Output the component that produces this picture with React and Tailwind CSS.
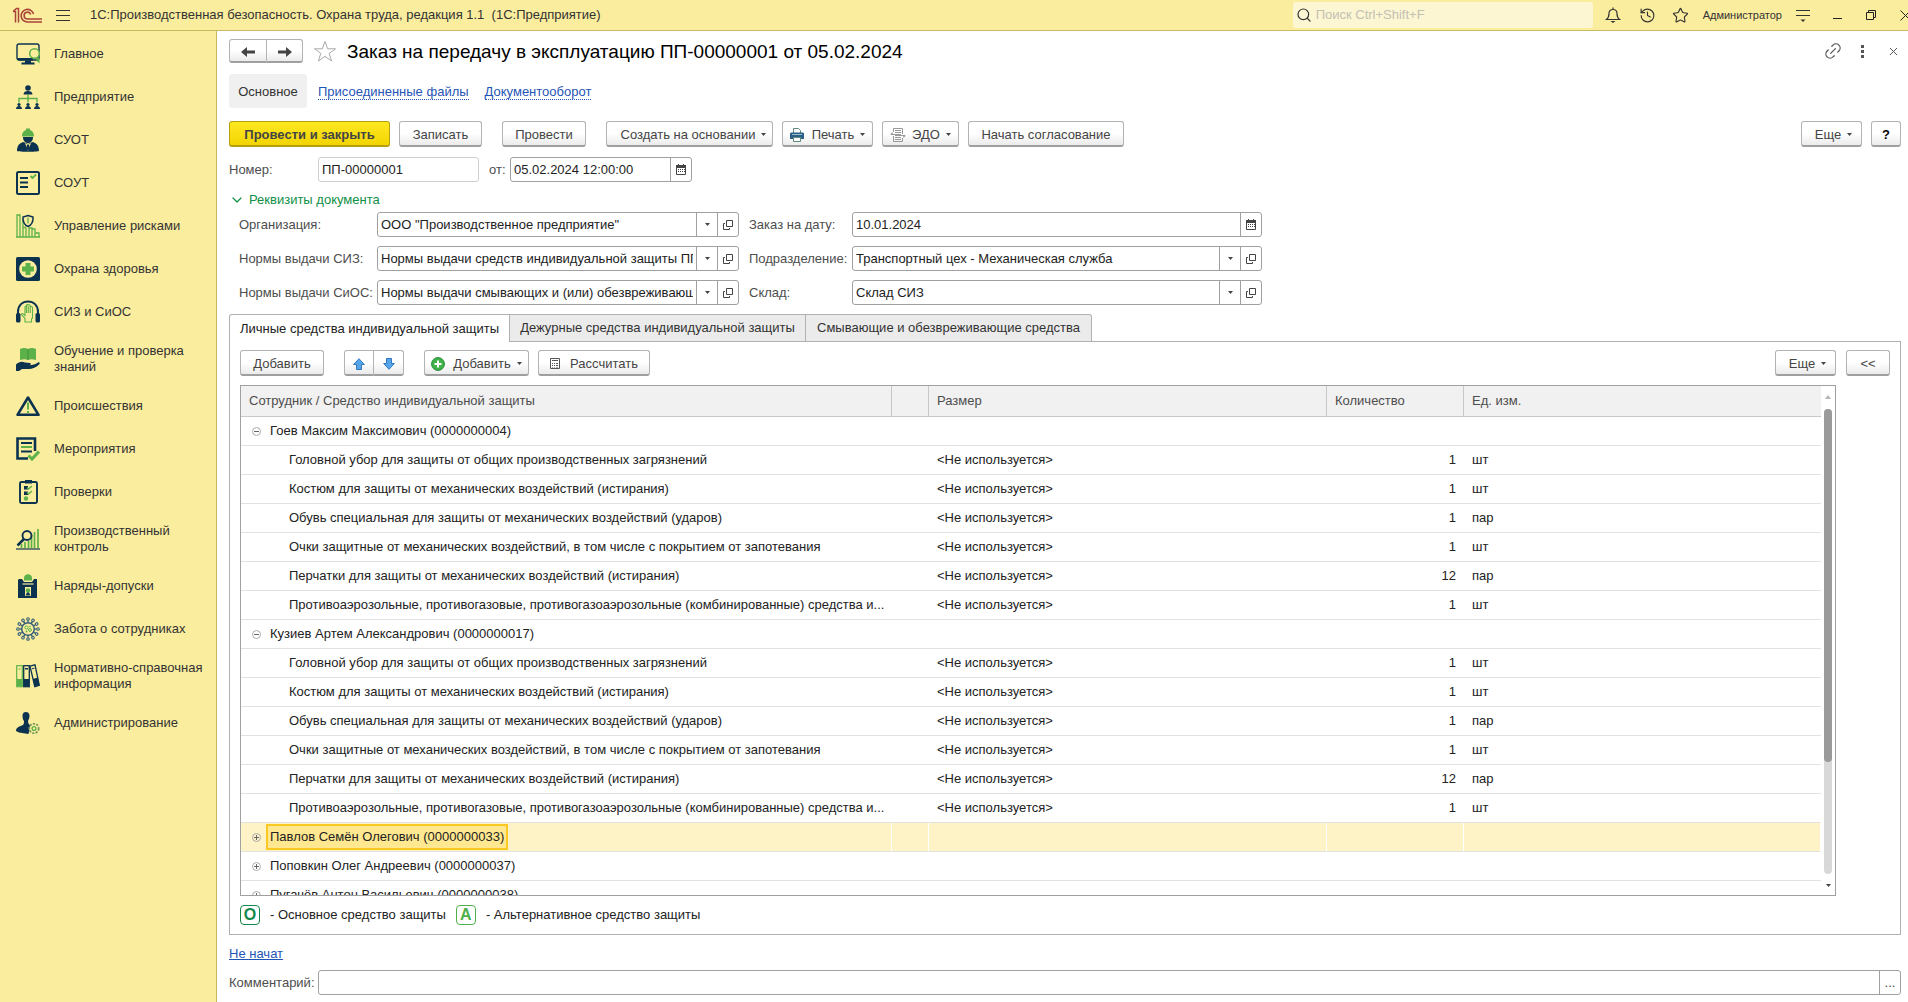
import { Bell, History, Star, Search, Link2, ChevronDown } from 'lucide-react';

const NAVY = '#0b3350';
const GREEN = '#5cb14a';

const Svg = ({ children, size = 24 }) => (
  <svg width={size} height={size} viewBox="0 0 24 24" fill="none" className="shrink-0" aria-hidden="true">
    {children}
  </svg>
);

const MonitorIcon = () => (
  <Svg>
    <rect x="1" y="2" width="22" height="16" rx="2" stroke={NAVY} strokeWidth="1.4" />
    <path d="M1 16h16v2.5H2.5z" fill={NAVY} />
    <path d="M9 18.500h6v2h3.500v2h-13v-2H9z" fill={NAVY} />
    <circle cx="18.500" cy="11.500" r="4.800" stroke={GREEN} strokeWidth="1.500" fill="#fbed9e" />
    <path d="M21 15.500l2.500 1v5l-3-3z" fill={GREEN} />
  </Svg>
);

const OrgIcon = () => (
  <Svg>
    <circle cx="12" cy="3" r="2.800" fill={NAVY} />
    <path d="M7.500 9.500c0-2.500 2-3.500 4.500-3.500s4.500 1 4.500 3.500z" fill={NAVY} />
    <path d="M12 9.500v8M3 17.500v-4h18v4" stroke={GREEN} strokeWidth="1.400" />
    {[3, 12, 21].map((x) => (
      <g key={x} fill={NAVY}>
        <circle cx={x} cy="19.500" r="1.600" />
        <path d={`M${x - 3} 24c0-2 1.500-3 3-3s3 1 3 3z`} />
      </g>
    ))}
  </Svg>
);

const WorkerIcon = () => (
  <Svg>
    <path d="M6 8.500c0-4 2-6 4-6.500V.500h4V2c2 .500 4 2.500 4 6.500z" fill={GREEN} />
    <path d="M7 9h10c0 4-2.500 6-5 6s-5-2-5-6z" fill={NAVY} />
    <path d="M1 23c0-5 2-8 6.500-9l4.500 2 4.500-2c4.500 1 6.500 4 6.500 9-2 1-20 1-22 0z" fill={NAVY} />
    <path d="M9 15l3 8 3-8-1.500 1h-3z" fill="#fbed9e" />
    <path d="M11 16.500h2l.800 4-1.800 2-1.800-2z" fill={NAVY} />
  </Svg>
);

const ChecklistIcon = () => (
  <Svg>
    <rect x="1" y="1" width="22" height="22" rx="1.500" stroke={NAVY} strokeWidth="2" />
    <path d="M4 7h8M4 11.500h8M4 16h8" stroke={NAVY} strokeWidth="1.800" />
    <path d="M14.500 5l2 2 3.500-3.500" stroke={GREEN} strokeWidth="1.800" />
  </Svg>
);

const RiskIcon = () => (
  <Svg>
    <path d="M1 23V1h3v22M7 23V5M7 13.500h3M10 23v-9M13 23V14h3v9M16 15h3v8M19 19h4v4M0 23h24" stroke={GREEN} strokeWidth="1.300" />
    <path d="M12 1.500l5 1.500c.300 5-1.500 8-5 9.500C8.500 11 6.700 8 7 3z" fill="#fbed9e" stroke={NAVY} strokeWidth="1.500" />
    <path d="M12 3.500v6" stroke={GREEN} strokeWidth="1.300" />
  </Svg>
);

const HealthIcon = () => (
  <Svg>
    <rect width="24" height="24" rx="1.500" fill={NAVY} />
    <circle cx="12" cy="12" r="8.800" fill="#fbed9e" />
    <path d="M9.500 6h5v3.500H18v5h-3.500V18h-5v-3.500H6v-5h3.500z" fill={GREEN} />
  </Svg>
);

const HeadphonesIcon = () => (
  <Svg>
    <path d="M2 15v-3C2 5 6.500 1.500 12 1.500S22 5 22 12v3" stroke={NAVY} strokeWidth="2" />
    <rect x="0" y="13" width="4.500" height="9.500" rx="1.500" fill={NAVY} />
    <rect x="19.500" y="13" width="4.500" height="9.500" rx="1.500" fill={NAVY} />
    <path d="M9 22v-3.500L5.500 14.500c0-1.200 1-1.200 1.600-.600L9 15.500V7c0-1 1.500-1 1.500 0V5.500c0-1.200 1.800-1.200 1.800 0 0-1.200 1.900-1 1.900.300v1.500c0-1 2.300-1 2.300.200V18l-1 1v3zM10.500 7v6M12.300 6v7M14.200 7v6" stroke={GREEN} strokeWidth="1.100" />
  </Svg>
);

const TrainingIcon = () => (
  <Svg>
    <path d="M4 2c3-1.500 6-1 8 0 2-1 5-1.500 8 0v11c-3-1-6-1-8 0-2-1-5-1-8 0z" fill={GREEN} />
    <path d="M12 2v11" stroke="#3d8a35" strokeWidth=".800" />
    <path d="M0 17.500c3-3 6-3.500 9-2l5 .500c1.500.500 1 2-.500 2.200 3 0 6-1 8.500-2.700 1.500-.500 2 .500 1.500 1.500-3 3.500-7 5-11 5H6l-3 2H0z" fill={NAVY} />
  </Svg>
);

const WarningIcon = () => (
  <Svg>
    <path d="M12 3.500L22.500 20.800h-21z" stroke={NAVY} strokeWidth="2.600" strokeLinejoin="round" />
    <path d="M12 8.500v7M12 17v2" stroke={GREEN} strokeWidth="2" />
  </Svg>
);

const ActionsIcon = () => (
  <Svg>
    <path d="M19 14V1.500H1.500v20H12" stroke={NAVY} strokeWidth="2.600" />
    <path d="M5 6h11M5 14.500h11" stroke={NAVY} strokeWidth="2" />
    <path d="M5 10h11" stroke={GREEN} strokeWidth="2" />
    <path d="M12.500 18.500l3.500 3.500 7-7.500" stroke={GREEN} strokeWidth="3" />
  </Svg>
);

const InspectIcon = () => (
  <Svg>
    <rect x="4" y="2" width="17" height="21" rx="1.500" stroke={NAVY} strokeWidth="1.900" />
    <rect x="9" y="0" width="7" height="3.500" fill={NAVY} />
    <path d="M8 6h4v3.500H8zM8 11.500h4V15H8z" fill={NAVY} />
    <path d="M11 7.500L12.500 9 16 6M11 12.500l1.500 1.500 3.500-3" stroke={GREEN} strokeWidth="1.500" />
    <circle cx="10" cy="18.500" r="2.200" fill={GREEN} />
  </Svg>
);

const ControlIcon = () => (
  <Svg>
    <path d="M5.500 21v-4M9 21v-6M12.500 21v-7M15.500 21V8M18.500 21V5M22 21V2" stroke={GREEN} strokeWidth="1.700" />
    <circle cx="11" cy="8.500" r="4.500" stroke={NAVY} strokeWidth="1.900" fill="#fbed9e" />
    <path d="M8 12l-6.500 6.500" stroke={NAVY} strokeWidth="2.500" />
    <path d="M0 22h24" stroke={NAVY} strokeWidth="1.200" />
  </Svg>
);

const PermitIcon = () => (
  <Svg>
    <path d="M3 5h3l2 3h8l2-3h3v19H2V6z" fill={NAVY} />
    <path d="M8 6.500V4c0-5 8-5 8 0v2.500z" fill={GREEN} />
    <path d="M6.500 10h11" stroke="#fbed9e" strokeWidth="1.200" />
    <rect x="9" y="13" width="6" height="9" fill="#fbed9e" />
    <circle cx="12" cy="16.500" r="2.300" fill={GREEN} />
    <path d="M9.500 21.500h5l-1.500-3h-2z" fill={NAVY} />
  </Svg>
);

const CareIcon = () => (
  <Svg>
    <circle cx="12" cy="12" r="6.300" stroke="#35607a" strokeWidth="1.500" />
    {[0, 30, 60, 90, 120, 150, 180, 210, 240, 270, 300, 330].map((a) => (
      <g key={a} transform={`rotate(${a} 12 12)`} stroke="#35607a">
        <path d="M12 6V3.500" strokeWidth="1.300" />
        <circle cx="12" cy="2" r="1.300" strokeWidth="1.100" />
      </g>
    ))}
    <circle cx="10.500" cy="10.500" r="1.600" stroke={GREEN} />
    <circle cx="14" cy="13" r="1.400" stroke={GREEN} />
    <circle cx="10.500" cy="14.500" r=".900" fill={GREEN} />
    <circle cx="14" cy="9.500" r=".800" fill={GREEN} />
  </Svg>
);

const BindersIcon = () => (
  <Svg>
    <rect x=".700" y="1.700" width="5.600" height="21" stroke={GREEN} strokeWidth="1.200" />
    <path d="M1 15h5v7H1z" fill={GREEN} />
    <path d="M2.500 5h2" stroke={GREEN} />
    <rect x="7.700" y="1.700" width="5.600" height="21" stroke={NAVY} strokeWidth="1.300" />
    <path d="M8 15h5v7H8zM9 4h3v1.500H9z" fill={NAVY} />
    <path d="M14 2.200l5-1.400 4.300 20.500-4.500 1.400z" stroke={NAVY} strokeWidth="1.300" />
    <path d="M16.800 15l5-1.400 1.600 7.700-4.600 1.400z" fill={NAVY} />
    <path d="M16 4.800l2.500-.700" stroke={NAVY} />
  </Svg>
);

const AdminIcon = () => (
  <Svg>
    <path d="M6.500 4.500C6.500 2 8 1 10 1s3.500 1.500 3.500 4c0 2-1 4-1.500 5 0 2 1 3.500 2.500 4.500l-2 8.500C8 22 4 22.500 0 20c0-3 2-4 6-5.500 2-1 2-2.500 2-4.500-1-1-1.500-3-1.500-5.500z" fill={NAVY} />
    <circle cx="18" cy="17.500" r="4.700" fill="#fbed9e" stroke="#7d9a5c" strokeWidth="1.800" strokeDasharray="2.200 1.200" />
    <circle cx="18" cy="17.500" r="1.900" stroke={GREEN} strokeWidth="1.300" />
  </Svg>
);

const sections = [
  { label: 'Главное', icon: MonitorIcon },
  { label: 'Предприятие', icon: OrgIcon },
  { label: 'СУОТ', icon: WorkerIcon },
  { label: 'СОУТ', icon: ChecklistIcon },
  { label: 'Управление рисками', icon: RiskIcon },
  { label: 'Охрана здоровья', icon: HealthIcon },
  { label: 'СИЗ и СиОС', icon: HeadphonesIcon },
  { label: 'Обучение и проверка знаний', icon: TrainingIcon, tall: true },
  { label: 'Происшествия', icon: WarningIcon },
  { label: 'Мероприятия', icon: ActionsIcon },
  { label: 'Проверки', icon: InspectIcon },
  { label: 'Производственный контроль', icon: ControlIcon, tall: true },
  { label: 'Наряды-допуски', icon: PermitIcon },
  { label: 'Забота о сотрудниках', icon: CareIcon },
  { label: 'Нормативно-справочная информация', icon: BindersIcon, tall: true },
  { label: 'Администрирование', icon: AdminIcon },
];

const items = [
  ['Головной убор для защиты от общих производственных загрязнений', 1, 'шт'],
  ['Костюм для защиты от механических воздействий (истирания)', 1, 'шт'],
  ['Обувь специальная для защиты от механических воздействий (ударов)', 1, 'пар'],
  ['Очки защитные от механических воздействий, в том числе с покрытием от запотевания', 1, 'шт'],
  ['Перчатки для защиты от механических воздействий (истирания)', 12, 'пар'],
  ['Противоаэрозольные, противогазовые, противогазоаэрозольные (комбинированные) средства и...', 1, 'шт'],
];

const employees = [
  { name: 'Гоев Максим Максимович (0000000004)', items },
  { name: 'Кузиев Артем Александрович (0000000017)', items },
  { name: 'Павлов Семён Олегович (0000000033)', selected: true },
  { name: 'Поповкин Олег Андреевич (0000000037)' },
  { name: 'Пугачёв Антон Васильевич (0000000038)' },
];

const Caret = () => (
  <svg width="5" height="3" viewBox="0 0 5 3" className="shrink-0" aria-hidden="true">
    <path d="M0 0h5L2.500 3z" fill="#444" />
  </svg>
);

const CalendarIcon = () => (
  <svg width="10" height="11" viewBox="0 0 10 11" aria-hidden="true">
    <path d="M.500 2.500h9v8h-9z" fill="none" stroke="#444" />
    <path d="M0 1h10v3H0zM2 0h1v2H2zM7 0h1v2H7zM2 5h1v1H2zM4 5h1v1H4zM6 5h1v1H6zM2 7h1v1H2zM4 7h1v1H4zM6 7h1v1H6zM8 5h1v1H8zM8 7h1v1H8z" fill="#444" />
  </svg>
);

const OpenIcon = () => (
  <svg width="10" height="10" viewBox="0 0 10 10" fill="none" stroke="#444" aria-hidden="true">
    <path d="M3.500.500h6v6h-6zM2 3.500H.500v6h6V8" />
  </svg>
);

const PrinterIcon = () => (
  <svg width="14" height="14" viewBox="0 0 14 14" className="mr-[2px]" aria-hidden="true">
    <path d="M3.500 5V.500h5l2 2V5" fill="#fff" stroke="#5f8a7c" />
    <path d="M0 6c0-1 .500-1.500 1.500-1.500h11c1 0 1.500.500 1.500 1.500v5H0z" fill="#2b5f86" />
    <path d="M2 6.500h10" stroke="#9dbdd2" />
    <path d="M3.500 9.500h7v4h-7z" fill="#fff" stroke="#5f8a7c" />
  </svg>
);

const EdoIcon = () => (
  <svg width="16" height="14" viewBox="0 0 16 14" fill="none" stroke="#999" aria-hidden="true">
    <path d="M3.500 4V.500h9V6M3.500 8v5.500h9V10M5 2.500h6M5 4.500h6M5 9.500h6M5 11.500h6M1 6.500h10M5 7.500h10" />
    <path d="M2.500 4L0 6.500h3zM13.500 10L16 7.500h-3z" fill="#999" stroke="none" />
  </svg>
);

const BlueArrow = ({ down }) => (
  <svg width="12" height="12" viewBox="0 0 12 12" className={down ? 'rotate-180' : ''} aria-hidden="true">
    <path d="M6 .700l5.300 5.800H8.500v5h-5v-5H.700z" fill="#56a5ea" stroke="#2f78bd" />
  </svg>
);

const PlusIcon = () => (
  <svg width="14" height="14" viewBox="0 0 14 14" className="mr-[2px]" aria-hidden="true">
    <circle cx="7" cy="7" r="6.400" fill="#3fb34a" stroke="#1f8a35" />
    <path d="M7 3.500v7M3.500 7h7" stroke="#fff" strokeWidth="2" />
  </svg>
);

const CalcIcon = () => (
  <svg width="10" height="11" viewBox="0 0 10 11" aria-hidden="true">
    <path d="M.500.500h9v10h-9z" fill="none" stroke="#555" />
    <path d="M2 2h6v1H2zM2 5h1v1H2zM4 5h1v1H4zM6 5h2v1H6zM2 7h1v1H2zM4 7h1v1H4zM6 7h2v1H6zM2 9h1v.500H2zM4 9h1v.500H4zM6 9h2v.500H6z" fill="#555" />
  </svg>
);

function Btn({ height = 'h-[26px]', className = '', children, ...rest }) {
  return (
    <button
      type="button"
      className={`flex shrink-0 items-center justify-center rounded-[3px] border border-[#b3b3b3] border-b-2 border-b-[#9f9f9f] bg-linear-to-b from-white from-50% to-[#ebebeb] pt-[2px] text-[#444] ${height} ${className}`}
      {...rest}
    >
      {children}
    </button>
  );
}

function Field({ id, label, value, labelClass, className = '', date, select }) {
  return (
    <div className="flex items-center">
      <label htmlFor={id} className={`shrink-0 whitespace-nowrap text-[#4d4d4d] ${labelClass}`}>{label}</label>
      <div className={`flex h-[25px] overflow-hidden rounded-[3px] border border-[#a0a0a0] bg-white ${className}`}>
        <input id={id} defaultValue={value} className="min-w-0 flex-1 px-[3px] text-[#222] outline-none" />
        {select && (
          <button type="button" aria-label="Выбрать" className="flex w-[21px] items-center justify-center border-l border-[#a0a0a0]">
            <Caret />
          </button>
        )}
        <button type="button" aria-label={date ? 'Календарь' : 'Открыть'} className="flex w-[21px] items-center justify-center border-l border-[#a0a0a0]">
          {date ? <CalendarIcon /> : <OpenIcon />}
        </button>
      </div>
    </div>
  );
}

function TopBar() {
  return (
    <header className="flex h-[31px] items-center border-b border-[#c9ba62] bg-[#fbed9e] pl-3 text-[#333]">
      <svg width="30" height="18" viewBox="0 0 30 18" fill="none" stroke="#a8433a" aria-hidden="true">
        <path d="M1 5.500h2.500V16.500M6.500 16.500V2.500h-2L1.500 5" strokeWidth="1.500" />
        <path d="M21.500 8a6.300 6.300 0 1 0-6 8H30" strokeWidth="1.600" />
        <path d="M18.700 8.500a3.400 3.400 0 1 0-3.200 4.500H30" strokeWidth="1.600" />
      </svg>
      <button type="button" aria-label="Меню" className="ml-[14px] flex w-[14px] flex-col gap-1">
        <span className="h-px bg-[#333]" />
        <span className="h-px bg-[#333]" />
        <span className="h-px bg-[#333]" />
      </button>
      <span className="ml-5 whitespace-pre">1С:Производственная безопасность. Охрана труда, редакция 1.1  (1С:Предприятие)</span>
      <div className="ml-auto flex items-center">
        <label className="flex h-[26px] w-[300px] items-center gap-1 rounded-[3px] bg-[#fdf6d2] pl-[3px]">
          <Search size={16} strokeWidth={1.8} className="shrink-0" />
          <input aria-label="Поиск" placeholder="Поиск Ctrl+Shift+F" className="w-full outline-none placeholder:text-[#c2c0b4]" />
        </label>
        <button type="button" aria-label="Уведомления" className="ml-3">
          <svg width="16" height="16" viewBox="0 0 16 16" fill="none" stroke="#333" strokeWidth="1.200" aria-hidden="true">
            <path d="M1.500 12.500c2-1.500 2.500-3 2.500-6C4 4 5.500 2.500 8 2.500S12 4 12 6.500c0 3 .500 4.500 2.500 6zM8 2.500V.500" />
            <path d="M5.500 14h5L8 16z" fill="#333" stroke="none" />
          </svg>
        </button>
        <button type="button" aria-label="История" className="ml-[18px]"><History size={17} strokeWidth={1.6} /></button>
        <button type="button" aria-label="Избранное" className="ml-4"><Star size={17} strokeWidth={1.6} /></button>
        <span className="ml-[14px] text-[11px]">Администратор</span>
        <button type="button" aria-label="Настройки" className="ml-[14px]">
          <svg width="14" height="13" viewBox="0 0 14 13" stroke="#333" aria-hidden="true">
            <path d="M0 1.500h14M0 6.500h14" />
            <path d="M4.500 10.500h5L7 13z" fill="#333" stroke="none" />
          </svg>
        </button>
        <button type="button" aria-label="Свернуть" className="ml-[23px] h-2 w-[9px] border-b border-[#222]" />
        <button type="button" aria-label="Развернуть" className="ml-6">
          <svg width="10" height="10" viewBox="0 0 10 10" fill="none" stroke="#222" aria-hidden="true">
            <path d="M.500 2.500h7v7h-7zM2.500 2.500v-2h7v7h-2" />
          </svg>
        </button>
        <button type="button" aria-label="Закрыть" className="ml-6 w-[8px] overflow-hidden">
          <svg width="11" height="11" viewBox="0 0 11 11" stroke="#222" className="max-w-none" aria-hidden="true">
            <path d="M.500.500l10 10M10.500.500l-10 10" />
          </svg>
        </button>
      </div>
    </header>
  );
}

function Sidebar() {
  return (
    <nav className="w-[217px] shrink-0 border-r border-[#c9ba62] bg-[#fbed9e] pt-px">
      {sections.map(({ label, icon: Icon, tall }) => (
        <a
          key={label}
          href="#"
          className={`flex items-center gap-[14px] pr-3 pl-4 leading-4 text-[#333] ${tall ? 'h-[51px]' : 'h-[43px]'}`}
        >
          <Icon />
          <span>{label}</span>
        </a>
      ))}
    </nav>
  );
}

function GroupToggle({ open }) {
  return (
    <button type="button" aria-label={open ? 'Свернуть группу' : 'Развернуть группу'} className="mr-[9px]">
      <svg width="9" height="9" viewBox="0 0 9 9" fill="none" stroke="#aaa" aria-hidden="true">
        <circle cx="4.500" cy="4.500" r="4" />
        <path d={open ? 'M2 4.500h5' : 'M2 4.500h5M4.500 2v5'} stroke="#666" />
      </svg>
    </button>
  );
}

function ItemsTable() {
  return (
    <div className="flex h-[511px] w-full border border-[#a0a0a0]">
      <div className="min-w-0 flex-1 overflow-hidden">
        <table className="w-full table-fixed border-separate border-spacing-0 text-[#222]">
          <colgroup>
            <col />
            <col className="w-[37px]" />
            <col className="w-[398px]" />
            <col className="w-[137px]" />
            <col className="w-[357px]" />
          </colgroup>
          <thead>
            <tr className="h-[31px] bg-[#f1f1f1] text-left text-[#4d4d4d] *:border-b *:border-[#c8c8c8] *:px-2 *:font-normal">
              <th className="border-r">Сотрудник / Средство индивидуальной защиты</th>
              <th className="border-r" />
              <th className="border-r">Размер</th>
              <th className="border-r">Количество</th>
              <th>Ед. изм.</th>
            </tr>
          </thead>
          <tbody>
            {employees.map((e) => [
              <tr
                key={e.name}
                className={
                  e.selected
                    ? 'h-[29px] bg-[#fef2c7] *:border-r *:border-b *:border-r-white *:border-b-[#e2e2e2]'
                    : 'h-[29px] *:border-b *:border-[#e2e2e2]'
                }
              >
                <td className="p-0 pl-[11px]">
                  <div className="flex items-center">
                    <GroupToggle open={!!e.items} />
                    {e.selected ? (
                      <span className="-ml-1 h-[26px] border-2 border-[#f9c823] bg-[#ffe88f] px-[2px] leading-[22px]">{e.name}</span>
                    ) : (
                      <span>{e.name}</span>
                    )}
                  </div>
                </td>
                <td />
                <td />
                <td />
                <td />
              </tr>,
              ...(e.items || []).map(([name, qty, unit]) => (
                <tr key={e.name + name} className="h-[29px] *:border-b *:border-[#e2e2e2]">
                  <td className="p-0 pl-12 whitespace-nowrap">{name}</td>
                  <td />
                  <td className="px-2 py-0">&lt;Не используется&gt;</td>
                  <td className="px-2 py-0 text-right">{qty}</td>
                  <td className="px-2 py-0">{unit}</td>
                </tr>
              )),
            ])}
          </tbody>
        </table>
      </div>
      <div className="flex w-[14px] shrink-0 flex-col items-center pt-[9px] pb-2">
        <svg width="6" height="4" viewBox="0 0 6 4" aria-hidden="true"><path d="M0 4h6L3 0z" fill="#b5b5b5" /></svg>
        <div className="my-[10px] w-2 flex-1 rounded bg-[#d8d8d8]">
          <div className="h-[76%] rounded bg-[#9a9a9a]" />
        </div>
        <Caret />
      </div>
    </div>
  );
}

export default function App() {
  return (
    <div className="flex min-h-screen flex-col bg-white font-['Liberation_Sans',Arial,sans-serif] text-[13px] leading-4">
      <TopBar />
      <div className="flex flex-1">
        <Sidebar />
        <main className="flex min-w-0 flex-1 flex-col pt-2 pr-[7px] pl-3">
          <div className="flex h-6 items-center">
            <div className="flex">
              <Btn aria-label="Назад" height="h-6" className="w-[38px] rounded-r-none">
                <svg width="14" height="12" viewBox="0 0 14 12" aria-hidden="true"><path d="M0 6l6-5v3.500h8v3H6V11z" fill="#444" /></svg>
              </Btn>
              <Btn aria-label="Вперёд" height="h-6" className="w-9 rounded-l-none border-l-0">
                <svg width="14" height="12" viewBox="0 0 14 12" aria-hidden="true"><path d="M14 6L8 1v3.500H0v3h8V11z" fill="#444" /></svg>
              </Btn>
            </div>
            <button type="button" aria-label="В избранное" className="ml-[10px]">
              <svg width="24" height="23" viewBox="0 0 24 23" fill="#fff" stroke="#aaa" aria-hidden="true">
                <path d="M12 1.500l2.700 7.300h7.800l-6.300 4.600 2.400 7.600-6.600-4.600L5.400 21l2.400-7.600-6.300-4.600h7.800z" />
              </svg>
            </button>
            <h1 className="ml-[10px] pt-px text-[19px] text-black">Заказ на передачу в эксплуатацию ПП-00000001 от 05.02.2024</h1>
            <div className="ml-auto flex items-center pr-[4px] text-[#555]">
              <button type="button" aria-label="Ссылка"><Link2 size={20} strokeWidth={1.5} className="-rotate-45" /></button>
              <button type="button" aria-label="Ещё" className="ml-[18px] flex flex-col gap-[2px]">
                <span className="size-[3px] bg-[#555]" />
                <span className="size-[3px] bg-[#555]" />
                <span className="size-[3px] bg-[#555]" />
              </button>
              <button type="button" aria-label="Закрыть" className="ml-[26px]">
                <svg width="7" height="7" viewBox="0 0 7 7" stroke="#555" aria-hidden="true"><path d="M0 0l7 7M7 0L0 7" /></svg>
              </button>
            </div>
          </div>

          <div className="mt-[11px] flex h-[34px] items-center">
            <a href="#" className="flex h-full w-[78px] items-center justify-center rounded-[3px] bg-[#f0f0f0] pt-px text-[#333]">Основное</a>
            <a href="#" className="ml-[11px] border-b border-dotted border-[#1f55b5] pt-px leading-[15px] text-[#1f55b5]">Присоединенные файлы</a>
            <a href="#" className="ml-4 border-b border-dotted border-[#1f55b5] pt-px leading-[15px] text-[#1f55b5]">Документооборот</a>
          </div>

          <div className="mt-[13px] flex">
            <button
              type="button"
              className="h-[26px] w-[161px] rounded-[3px] border border-b-2 border-[#b89f0d] bg-linear-to-b from-[#ffe81f] to-[#f2d400] pt-[2px] font-bold text-[#444]"
            >
              Провести и закрыть
            </button>
            <Btn className="ml-[9px] w-[83px]">Записать</Btn>
            <Btn className="ml-5 w-[84px]">Провести</Btn>
            <Btn className="ml-5 w-[167px] gap-[6px] pl-2">Создать на основании <Caret /></Btn>
            <Btn className="ml-[9px] w-[91px] gap-[6px]"><PrinterIcon /> Печать <Caret /></Btn>
            <Btn className="ml-[9px] w-[77px] gap-[6px]"><EdoIcon /> ЭДО <Caret /></Btn>
            <Btn className="ml-[9px] w-[156px]">Начать согласование</Btn>
            <Btn className="ml-auto w-[61px] gap-[6px] pl-1">Еще <Caret /></Btn>
            <Btn className="ml-[9px] w-[30px] font-bold text-black">?</Btn>
          </div>

          <div className="mt-[10px] flex items-center">
            <label htmlFor="number" className="w-[89px] text-[#4d4d4d]">Номер:</label>
            <input
              id="number"
              readOnly
              value="ПП-00000001"
              className="h-[25px] w-[161px] rounded-[3px] border border-[#d0d0d0] pl-[3px] text-[#222] outline-none"
            />
            <div className="ml-[10px]">
              <Field id="date" label="от:" value="05.02.2024 12:00:00" labelClass="w-[21px]" className="w-[182px]" date />
            </div>
          </div>

          <button type="button" className="mt-[10px] flex items-center gap-1 self-start text-[#0f8f45]">
            <ChevronDown size={16} strokeWidth={1.8} />
            Реквизиты документа
          </button>

          <div className="mt-1 flex gap-[10px] pl-[10px]">
            <div className="flex flex-col gap-[9px]">
              <Field id="org" label="Организация:" value={'ООО "Производственное предприятие"'} labelClass="w-[138px]" className="w-[362px]" select />
              <Field id="siz" label="Нормы выдачи СИЗ:" value="Нормы выдачи средств индивидуальной защиты ПП" labelClass="w-[138px]" className="w-[362px]" select />
              <Field id="sios" label="Нормы выдачи СиОС:" value="Нормы выдачи смывающих и (или) обезвреживающих средств" labelClass="w-[138px]" className="w-[362px]" select />
            </div>
            <div className="flex flex-col gap-[9px]">
              <Field id="order-date" label="Заказ на дату:" value="10.01.2024" labelClass="w-[103px]" className="w-[410px]" date />
              <Field id="dept" label="Подразделение:" value="Транспортный цех - Механическая служба" labelClass="w-[103px]" className="w-[410px]" select />
              <Field id="stock" label="Склад:" value="Склад СИЗ" labelClass="w-[103px]" className="w-[410px]" select />
            </div>
          </div>

          <div role="tablist" className="relative z-10 mt-[9px] -mb-px flex h-7">
            <button type="button" role="tab" aria-selected="true" className="w-[281px] rounded-tl-[3px] border border-b-0 border-[#b0b0b0] bg-white text-[#222]">
              Личные средства индивидуальной защиты
            </button>
            <button type="button" role="tab" aria-selected="false" className="w-[296px] border border-l-0 border-[#b0b0b0] bg-[#ebebeb] text-[#333]">
              Дежурные средства индивидуальной защиты
            </button>
            <button type="button" role="tab" aria-selected="false" className="w-[286px] rounded-tr-[3px] border border-l-0 border-[#b0b0b0] bg-[#ebebeb] text-[#333]">
              Смывающие и обезвреживающие средства
            </button>
          </div>

          <section className="border border-[#b0b0b0] px-[10px] pt-2 pb-[9px]">
            <div className="flex">
              <Btn className="w-[84px]">Добавить</Btn>
              <Btn aria-label="Переместить вверх" className="ml-5 w-[30px] rounded-r-none"><BlueArrow /></Btn>
              <Btn aria-label="Переместить вниз" className="w-[30px] rounded-l-none border-l-0"><BlueArrow down /></Btn>
              <Btn className="ml-5 w-[105px] gap-[6px]"><PlusIcon /> Добавить <Caret /></Btn>
              <Btn className="ml-[9px] w-[112px] gap-[10px]"><CalcIcon /> Рассчитать</Btn>
              <Btn className="ml-auto w-[61px] gap-[6px] pl-1">Еще <Caret /></Btn>
              <Btn className="ml-[10px] w-[44px]">&lt;&lt;</Btn>
            </div>
            <div className="mt-[9px] flex pr-[54px]">
              <ItemsTable />
            </div>
            <div className="mt-[9px] flex h-5 items-center text-[#222]">
              <span className="flex size-5 items-center justify-center rounded border border-[#12894a] text-base font-bold text-[#12894a]">О</span>
              <span className="ml-[10px]">- Основное средство защиты</span>
              <span className="ml-[10px] flex size-5 items-center justify-center rounded border border-[#4fb04a] text-base font-bold text-[#4fb04a]">А</span>
              <span className="ml-[10px]">- Альтернативное средство защиты</span>
            </div>
          </section>

          <a href="#" className="mt-[11px] self-start text-[#1f55b5] underline">Не начат</a>
          <div className="mt-2 flex items-center">
            <label htmlFor="comment" className="w-[89px] shrink-0 text-[#4d4d4d]">Комментарий:</label>
            <div className="flex h-[25px] flex-1 rounded-[3px] border border-[#a0a0a0]">
              <input id="comment" className="min-w-0 flex-1 pl-[3px] outline-none" />
              <button type="button" aria-label="Выбрать комментарий" className="w-[21px] border-l border-[#a0a0a0] text-[#444]">...</button>
            </div>
          </div>
        </main>
      </div>
    </div>
  );
}
